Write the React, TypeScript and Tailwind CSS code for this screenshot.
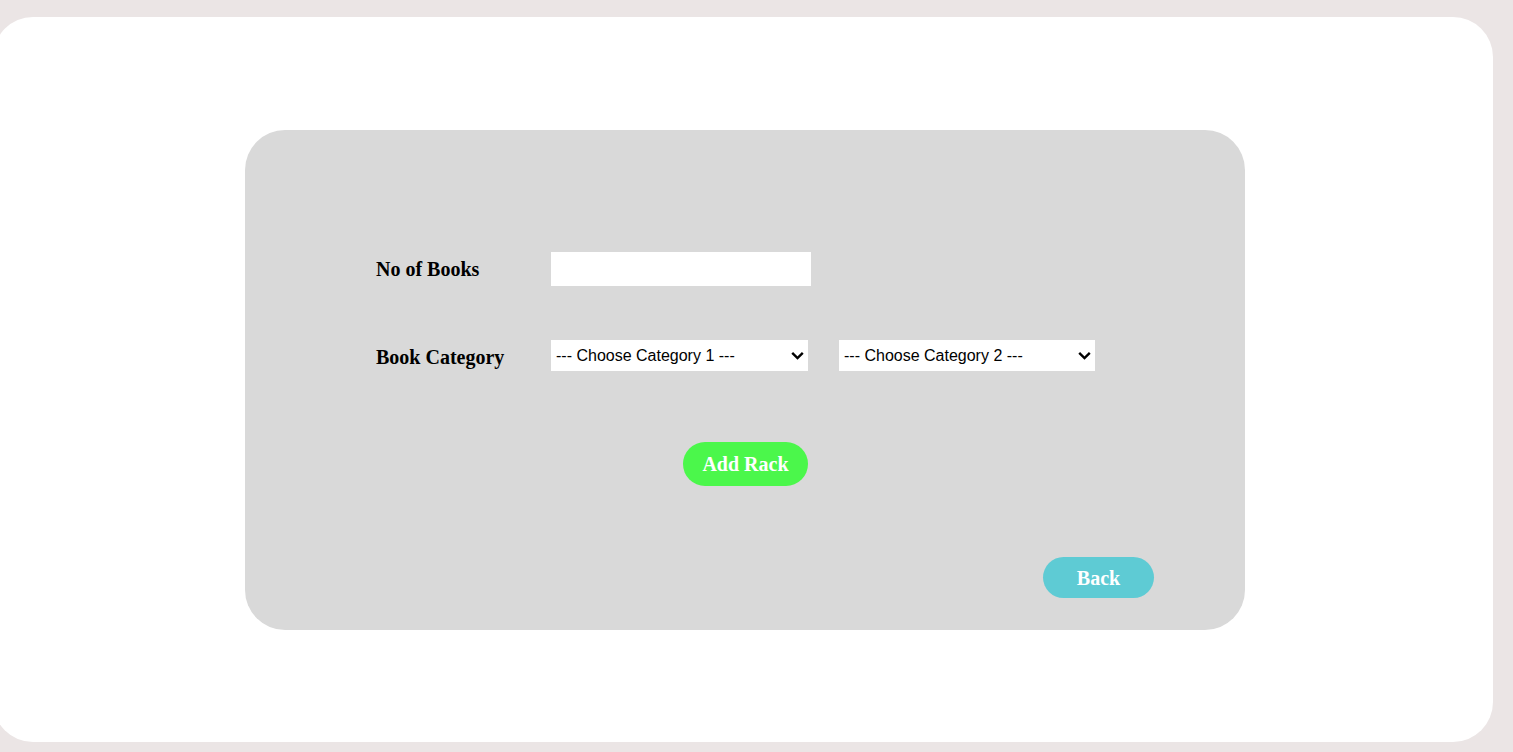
import React from "react";

const serif = "font-['Liberation_Serif','Times_New_Roman',serif]";

const Chevron = () => (
  <svg
    className="absolute right-[4px] top-[11px] pointer-events-none"
    width="13"
    height="9"
    viewBox="0 0 13 9"
    fill="none"
  >
    <path d="M1.2 1.8 L6.5 7 L11.8 1.8" stroke="#000" strokeWidth="2.4" />
  </svg>
);

const CategorySelect = ({ label, className }: { label: string; className?: string }) => (
  <div className={`relative h-[31px] ${className ?? ""}`}>
    <select className="appearance-none w-full h-[31px] bg-white font-['Liberation_Sans',Arial,sans-serif] text-[16px] text-black pl-[5px] pr-[20px] outline-none">
      <option>{label}</option>
    </select>
    <Chevron />
  </div>
);

const App = () => {
  return (
    <div className="w-full min-h-[752px] bg-[#ebe5e5] pt-[17px] pb-[10px] overflow-hidden">
      <div className="ml-[-7px] w-[1500px] h-[725px] bg-white rounded-[40px] flex justify-center pt-[113px] pl-[4px]">
        <div className="w-[1000px] h-[500px] bg-[#d9d9d9] rounded-[40px] pl-[131px] pt-[122px] flex flex-col">
          <div className="flex items-center h-[34px]">
            <label className={`${serif} w-[175px] text-[20px] font-bold text-black`}>No of Books</label>
            <input type="number" className="w-[260px] h-[34px] bg-white outline-none px-1" />
          </div>

          <div className="flex items-center h-[31px] mt-[54px]">
            <label className={`${serif} w-[175px] text-[20px] font-bold text-black pt-[3px]`}>Book Category</label>
            <CategorySelect label="--- Choose Category 1 ---" className="w-[257px]" />
            <CategorySelect label="--- Choose Category 2 ---" className="ml-[31px] w-[256px]" />
          </div>

          <div className="flex mt-[71px] pl-[307px]">
            <button className={`${serif} w-[125px] h-[44px] rounded-full bg-[#4bf74b] text-white text-[20px] font-bold`}>
              Add Rack
            </button>
          </div>

          <div className="flex mt-[71px] pl-[667px]">
            <button className={`${serif} w-[111px] h-[41px] rounded-full bg-[#5ecbd4] text-white text-[20px] font-bold`}>
              Back
            </button>
          </div>
        </div>
      </div>
    </div>
  );
};

export default App;
